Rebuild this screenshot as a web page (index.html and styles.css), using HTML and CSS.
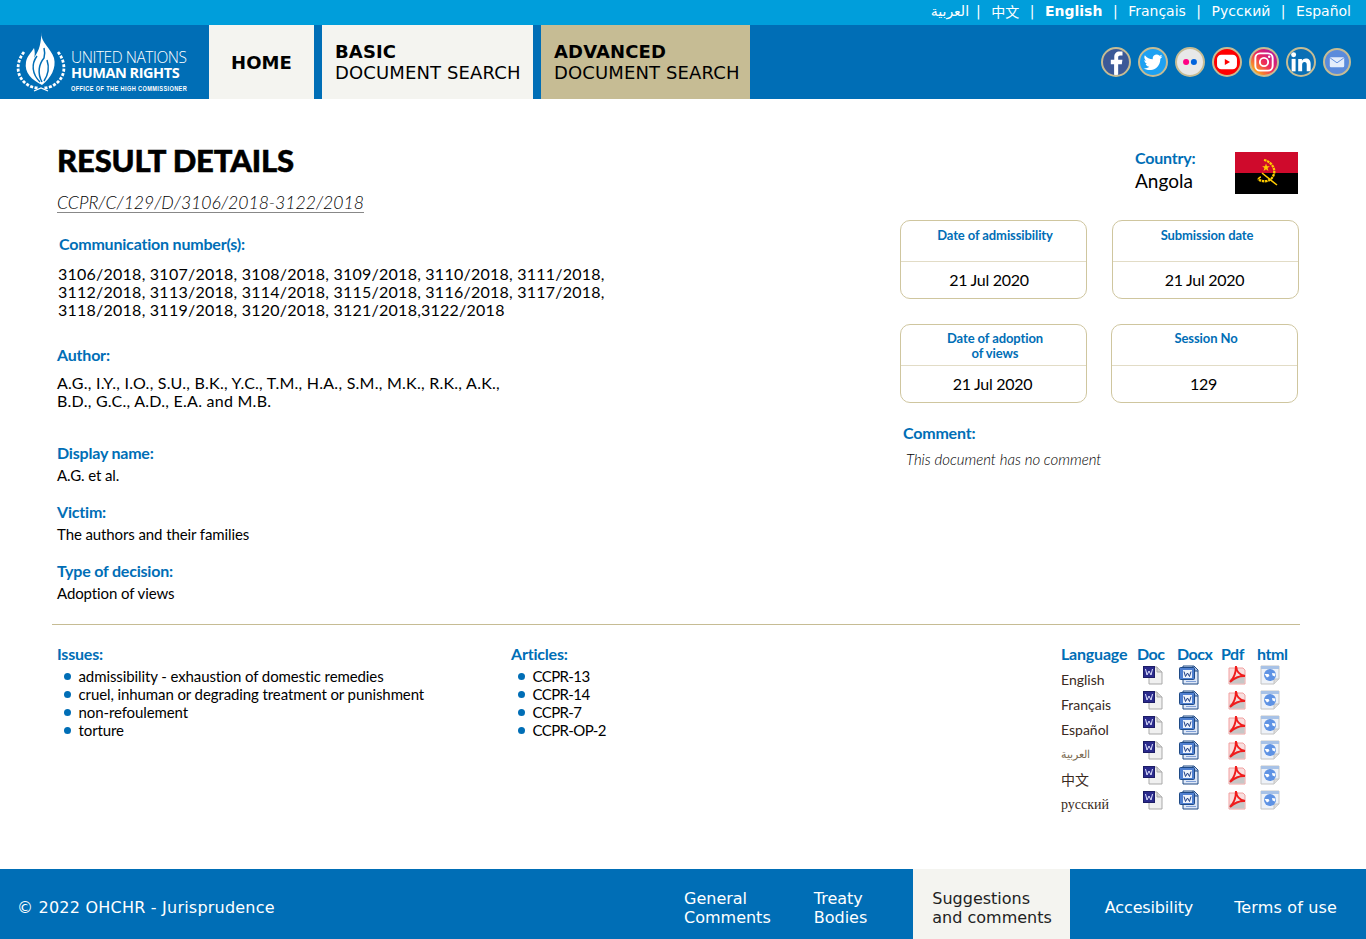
FILE: index.html
```html
<!DOCTYPE html>
<html lang="en">
<head>
  <meta charset="UTF-8" />
  <title>Result details - OHCHR Jurisprudence</title>
  <link rel="stylesheet" href="styles.css">
</head>
<body>

  <svg class="sprites" width="0" height="0" aria-hidden="true">
    <symbol id="doc" viewBox="0 0 20 20">
      <path d="M6 2h8l5 5v12H6z" fill="#f0f0f0" stroke="#a9a9a9"/>
      <path d="M14 2v5h5" fill="#d8d8d8" stroke="#a9a9a9"/>
      <rect x=".5" y="1.500" width="11" height="11" fill="#2a2a8c" stroke="#1c1c66"/>
      <path d="M2.500 4l1.500 6 2-4 2 4 1.500-6" fill="none" stroke="#dfe3ff" stroke-width="1"/>
    </symbol>
    <symbol id="docx" viewBox="0 0 20 20">
      <path d="M4 1h11l4 4v14H4z" fill="#dfe8f7" stroke="#1f4a86"/>
      <path d="M14 1v5h5" fill="#9db8e4" stroke="#1f4a86"/>
      <rect x=".5" y="2.500" width="15" height="12" rx="1" fill="#4f7fd0" stroke="#1f4a86"/>
      <rect x="4" y="5" width="9" height="8" fill="#eef3fb"/>
      <path d="M5 6.500l1.500 5 2-3.500 2 3.500 1.500-5" fill="none" stroke="#1f3f86" stroke-width="1"/>
      <path d="M7 16.500h10" stroke="#7fa0d8"/>
    </symbol>
    <symbol id="pdf" viewBox="0 0 18 20">
      <path d="M1 3h14l2 2v14H1z" fill="#f8dede" stroke="#f2a0a0"/>
      <path d="M1.500 14L16.500 9v9.500h-15z" fill="#c6c6c6"/>
      <path d="M2 17c3-3 6-8 6-16 .5 6 3 9 9 10-6-.5-10 1.500-15 6z" fill="none" stroke="#f01c1c" stroke-width="2"/>
    </symbol>
    <symbol id="html" viewBox="0 0 20 20">
      <path d="M1 1h18v13l-5 5H1z" fill="#eef2f8" stroke="#c4c4c4"/>
      <path d="M19 14h-5v5" fill="#ddd" stroke="#c4c4c4"/>
      <path d="M1 1h18v3H1z" fill="#a8c2e6"/>
      <circle cx="10" cy="10" r="6" fill="#5f93e4"/>
      <path d="M4.500 9h4l1 2-2.500 1.500zM12 8l3.500.5-.5 3-2.500-1z" fill="#fff"/>
    </symbol>
  </svg>

  <header>
    <div class="langbar">
      <a class="lang-ar" href="#">العربية</a><span class="sep first">|</span>
      <a href="#">中文</a><span class="sep">|</span>
      <a class="current" href="#">English</a><span class="sep">|</span>
      <a href="#">Français</a><span class="sep">|</span>
      <a href="#">Русский</a><span class="sep">|</span>
      <a href="#">Español</a>
    </div>
    <div class="mainbar">
      <a class="logo" href="#">
        <svg class="emblem" width="50" height="60" viewBox="0 0 50 60">
          <path d="M25.500 0C24 10 35 16 38 26c2.500 10-3 20-12 27C16 48 8 41 10 30c1-6 5-9 8-14 1 4 1 7 0 10 3-5 7-10 7.500-26z" fill="#fff"/>
          <g fill="none" stroke="#006eb6" stroke-width="1.500">
            <path d="M24 50C16 42 15 32 21 24"/>
            <path d="M26 50c-5-9-3-18 2-24 1-3 1-6 0-10"/>
            <path d="M28 49c4-6 6-12 3-21"/>
          </g>
          <g fill="none" stroke="#fff" stroke-width="2.800" stroke-dasharray="3 1.500">
            <path d="M8 20C0 30-1 45 12 53c3 2 7 3 11 3"/>
            <path d="M42 20c8 10 9 25-4 33-3 2-7 3-11 3"/>
          </g>
          <path d="M18 59l7-3 7 3" fill="none" stroke="#fff" stroke-width="1.200"/>
        </svg>
        <span class="logo-text">
          <span class="logo-un">UNITED NATIONS</span>
          <span class="logo-hr">HUMAN RIGHTS</span>
          <span class="logo-off">OFFICE OF THE HIGH COMMISSIONER</span>
        </span>
      </a>
      <nav class="mainnav">
        <a class="tab tab-home" href="#"><b>HOME</b></a>
        <a class="tab tab-basic" href="#"><b>BASIC</b><span>DOCUMENT SEARCH</span></a>
        <a class="tab tab-adv" href="#"><b>ADVANCED</b><span>DOCUMENT SEARCH</span></a>
      </nav>
      <div class="social">
        <a class="soc soc-fb" href="#"><svg viewBox="0 0 30 30"><path d="M17.500 30V17.500h4.200l.7-5h-4.900V9.800c0-1.400.5-2.400 2.400-2.400h2.600V3c-.7-.1-2-.2-3.500-.2-3.600 0-6 2.200-6 6.200v3.500H9v5h3.800V30z" fill="#fff"/></svg></a>
        <a class="soc soc-tw" href="#"><svg viewBox="0 0 30 30"><path d="M26 8.500c-.8.400-1.700.6-2.600.7.900-.6 1.600-1.400 2-2.500-.9.500-1.800.9-2.900 1.100-1.700-1.900-4.600-2-6.400-.2-1.200 1.100-1.700 2.800-1.300 4.300-3.600-.2-7-1.900-9.200-4.700-1.200 2.100-.6 4.700 1.400 6-.7 0-1.400-.2-2-.6 0 2.200 1.500 4.100 3.600 4.500-.7.200-1.400.2-2.100.1.600 1.900 2.300 3.100 4.300 3.200-2 1.500-4.400 2.200-6.800 1.900 6.700 4.300 15.700 1.600 18.600-6 .6-1.600.9-3.300.9-5 .9-.7 1.700-1.500 2.500-2.800z" fill="#fff"/></svg></a>
        <a class="soc soc-fl" href="#"><svg viewBox="0 0 30 30"><circle cx="10.500" cy="15" r="3.500" fill="#ff0084"/><circle cx="19.500" cy="15" r="3.500" fill="#0063dc"/></svg></a>
        <a class="soc soc-yt" href="#"><svg viewBox="0 0 30 30"><rect x="3.500" y="6.500" width="23" height="17" rx="5" fill="#fff"/><path d="M12.500 11.500v7l6-3.500z" fill="#f00"/></svg></a>
        <a class="soc soc-ig" href="#"><svg viewBox="0 0 30 30"><rect x="5" y="5" width="20" height="20" rx="5.500" fill="none" stroke="#fff" stroke-width="2.200"/><circle cx="15" cy="15" r="4.800" fill="none" stroke="#fff" stroke-width="2.200"/><circle cx="21" cy="9" r="1.400" fill="#fff"/></svg></a>
        <a class="soc soc-in" href="#"><svg viewBox="3 2 25 25"><rect x="6.500" y="11.500" width="3.800" height="12" fill="#fff"/><circle cx="8.400" cy="7.500" r="2.400" fill="#fff"/><path d="M12.800 11.500h3.600v1.700c.8-1.300 2.200-2 3.700-2 3.200 0 4.700 1.900 4.700 5.300v7h-3.800v-6.400c0-1.800-.7-2.700-2.100-2.700-1.600 0-2.300 1.100-2.300 2.800v6.300h-3.800z" fill="#fff"/></svg></a>
        <a class="soc soc-ml" href="#"><svg viewBox="0 0 30 30"><rect x="6" y="9" width="18" height="12.500" rx="1.500" fill="#e4edfb"/><path d="M6.500 10l8.500 6 8.500-6" fill="none" stroke="#5b8bdc" stroke-width="1.200"/></svg></a>
      </div>
    </div>
  </header>

  <main>
    <section class="top">
      <div class="left">
        <h1>RESULT DETAILS</h1>
        <a class="symbol" href="#">CCPR/C/129/D/3106/2018-3122/2018</a>

        <div class="field field-comm">
          <h2>Communication number(s):</h2>
          <p class="comm-text">3106/2018, 3107/2018, 3108/2018, 3109/2018, 3110/2018, 3111/2018,<br>3112/2018, 3113/2018, 3114/2018, 3115/2018, 3116/2018, 3117/2018,<br>3118/2018, 3119/2018, 3120/2018, 3121/2018,3122/2018</p>
        </div>
        <div class="field field-author">
          <h2>Author:</h2>
          <p class="author-text">A.G., I.Y., I.O., S.U., B.K., Y.C., T.M., H.A., S.M., M.K., R.K., A.K.,<br>B.D., G.C., A.D., E.A. and M.B.</p>
        </div>
        <div class="field field-small first">
          <h2>Display name:</h2>
          <p>A.G. et al.</p>
        </div>
        <div class="field field-small">
          <h2>Victim:</h2>
          <p>The authors and their families</p>
        </div>
        <div class="field field-small">
          <h2>Type of decision:</h2>
          <p>Adoption of views</p>
        </div>
      </div>

      <aside class="right">
        <div class="country">
          <div class="country-name">
            <h2>Country:</h2>
            <p>Angola</p>
          </div>
          <svg class="flag" width="63" height="42" viewBox="0 0 63 42">
            <rect width="63" height="21" fill="#cf0a2c"/>
            <rect y="21" width="63" height="21" fill="#000"/>
            <path d="M29 8c9 2 14 12 7 19-4 3-9 3-13 0" fill="none" stroke="#ffcb00" stroke-width="2.300" stroke-dasharray="2.500 .7"/>
            <path d="M27 21l15 12M23 27c1-1 2-2 3-2" fill="none" stroke="#ffcb00" stroke-width="1.600"/>
            <path d="M31 11.500l1 2.800h2.900l-2.300 1.800.8 2.900-2.400-1.700-2.400 1.700.8-2.900-2.300-1.800H30z" fill="#ffcb00"/>
          </svg>
        </div>
        <div class="dates">
          <div class="date-card date-first">
            <h3>Date of admissibility</h3>
            <p>21 Jul 2020</p>
          </div>
          <div class="date-card">
            <h3>Submission date</h3>
            <p>21 Jul 2020</p>
          </div>
          <div class="date-card date-row2">
            <h3>Date of adoption<br>of views</h3>
            <p>21 Jul 2020</p>
          </div>
          <div class="date-card date-row2 date-last">
            <h3>Session No</h3>
            <p>129</p>
          </div>
        </div>
        <div class="comment">
          <h2>Comment:</h2>
          <p>This document has no comment</p>
        </div>
      </aside>
    </section>

    <section class="bottom">
      <div class="issues">
        <h2>Issues:</h2>
        <ul>
          <li>admissibility - exhaustion of domestic remedies</li>
          <li>cruel, inhuman or degrading treatment or punishment</li>
          <li>non-refoulement</li>
          <li>torture</li>
        </ul>
      </div>
      <div class="articles">
        <h2>Articles:</h2>
        <ul>
          <li>CCPR-13</li>
          <li>CCPR-14</li>
          <li>CCPR-7</li>
          <li>CCPR-OP-2</li>
        </ul>
      </div>
      <table class="files">
        <thead>
          <tr><th>Language</th><th>Doc</th><th>Docx</th><th>Pdf</th><th>html</th></tr>
        </thead>
        <tbody>
          <tr><td class="lng">English</td><td><svg class="fi"><use href="#doc"/></svg></td><td><svg class="fi"><use href="#docx"/></svg></td><td><svg class="fi"><use href="#pdf"/></svg></td><td><svg class="fi"><use href="#html"/></svg></td></tr>
          <tr><td class="lng">Français</td><td><svg class="fi"><use href="#doc"/></svg></td><td><svg class="fi"><use href="#docx"/></svg></td><td><svg class="fi"><use href="#pdf"/></svg></td><td><svg class="fi"><use href="#html"/></svg></td></tr>
          <tr><td class="lng">Español</td><td><svg class="fi"><use href="#doc"/></svg></td><td><svg class="fi"><use href="#docx"/></svg></td><td><svg class="fi"><use href="#pdf"/></svg></td><td><svg class="fi"><use href="#html"/></svg></td></tr>
          <tr><td class="lng lng-ar">العربية</td><td><svg class="fi"><use href="#doc"/></svg></td><td><svg class="fi"><use href="#docx"/></svg></td><td><svg class="fi"><use href="#pdf"/></svg></td><td><svg class="fi"><use href="#html"/></svg></td></tr>
          <tr><td class="lng">中文</td><td><svg class="fi"><use href="#doc"/></svg></td><td><svg class="fi"><use href="#docx"/></svg></td><td><svg class="fi"><use href="#pdf"/></svg></td><td><svg class="fi"><use href="#html"/></svg></td></tr>
          <tr><td class="lng lng-ru">русский</td><td><svg class="fi"><use href="#doc"/></svg></td><td><svg class="fi"><use href="#docx"/></svg></td><td><svg class="fi"><use href="#pdf"/></svg></td><td><svg class="fi"><use href="#html"/></svg></td></tr>
        </tbody>
      </table>
    </section>
  </main>

  <footer>
    <div class="copy">© 2022 OHCHR - Jurisprudence</div>
    <nav class="footnav">
      <a class="fl fl-gc" href="#">General<br>Comments</a>
      <a class="fl fl-tb" href="#">Treaty<br>Bodies</a>
      <a class="fl fl-sg" href="#">Suggestions<br>and comments</a>
      <a class="fl fl-ac" href="#">Accesibility</a>
      <a class="fl fl-tu" href="#">Terms of use</a>
    </nav>
  </footer>

</body>
</html>
```

FILE: styles.css
```css
:root {
  --blue: #006eb6;
  --sky: #009edb;
  --tan: #c6bc94;
  --paper: #f4f4f0;
  --line: #cfc69f;
}
* {
  box-sizing: border-box;
}
body {
  margin: 0;
  height: 939px;
  display: flex;
  flex-direction: column;
  font-family: "Lato", "Noto Sans CJK SC", sans-serif;
  color: #000;
  background: #fff;
}
a {
  color: inherit;
  text-decoration: none;
}
h1, h2, h3, p, ul {
  margin: 0;
  padding: 0;
}
.sprites {
  position: absolute;
}

/* header */
.langbar {
  height: 25px;
  background: var(--sky);
  color: #fff;
  display: flex;
  justify-content: flex-end;
  align-items: center;
  padding: 0 15px 3px 0;
  font-family: "DejaVu Sans", "Noto Sans CJK SC", sans-serif;
  font-size: 14px;
}
.langbar .current {
  font-weight: bold;
}
.sep {
  margin: 0 10.500px;
}
.sep.first {
  margin-left: 7px;
}
.mainbar {
  height: 74px;
  background: var(--blue);
  display: flex;
  align-items: stretch;
}
.logo {
  width: 209px;
  display: flex;
  align-items: center;
  padding-left: 16px;
  color: #fff;
}
.emblem {
  flex: none;
  margin-right: 5px;
}
.logo-text {
  display: flex;
  flex-direction: column;
  font-family: "Open Sans", sans-serif;
  white-space: nowrap;
  padding-top: 19px;
}
.logo-un {
  font-size: 15.500px;
  line-height: 16px;
  letter-spacing: -.45px;
  font-weight: 300;
}
.logo-hr {
  font-size: 14.500px;
  line-height: 15px;
  font-weight: 700;
  letter-spacing: -.45px;
}
.logo-off {
  font-family: "Liberation Sans", sans-serif;
  font-size: 8px;
  line-height: 10px;
  margin-top: 4px;
  font-weight: 700;
  letter-spacing: .55px;
  transform: scaleX(.7);
  transform-origin: left;
  width: 120px;
}
.mainnav {
  display: flex;
  gap: 8px;
}
.tab {
  background: var(--paper);
  font-family: "DejaVu Sans", sans-serif;
  font-size: 18px;
  line-height: 21px;
  display: flex;
  flex-direction: column;
  justify-content: center;
  padding: 0 13px;
  white-space: nowrap;
  letter-spacing: .13px;
}
.tab-home {
  width: 105px;
  align-items: center;
  padding: 0;
}
.tab-basic {
  width: 211px;
}
.tab-adv {
  width: 209px;
  background: var(--tan);
}
.social {
  margin-left: auto;
  padding-right: 15px;
  display: flex;
  align-items: center;
  gap: 7px;
}
.soc {
  width: 30px;
  height: 30px;
  border-radius: 50%;
  border: 2px solid var(--tan);
  overflow: hidden;
  display: block;
}
.soc svg {
  display: block;
  width: 100%;
  height: 100%;
}
.soc-fb { background: #3b5998; }
.soc-tw { background: #1da1f2; }
.soc-fl { background: #e8e8e8; }
.soc-yt { background: #f00; }
.soc-ig { background: linear-gradient(45deg, #fdb515 10%, #ee2a5b 50%, #b5179e 90%); }
.soc-in { background: #0a6fb5; }
.soc-ml {
  background: #5b8bdc;
  width: 28px;
  height: 28px;
}

/* main */
main {
  flex: 1;
}
.top {
  display: flex;
  justify-content: space-between;
  padding: 0 67px 0 57px;
  height: 525px;
}
.left {
  padding-top: 45px;
}
h1 {
  font-size: 31px;
  line-height: 32px;
  font-weight: 900;
  letter-spacing: -.15px;
  -webkit-text-stroke: .5px #000;
}
.symbol {
  display: inline-block;
  margin-top: 18px;
  font-size: 17.600px;
  line-height: 18px;
  font-style: italic;
  font-weight: 300;
  color: #000;
  border-bottom: 1px solid #888;
}
h2 {
  font-size: 16px;
  line-height: 20px;
  font-weight: 700;
  letter-spacing: -.2px;
  color: var(--blue);
}
.field p {
  font-size: 16px;
  line-height: 18px;
}
.field-comm {
  margin-top: 21px;
}
.field-comm h2 {
  padding-left: 2px;
}
.comm-text {
  margin-top: 11px;
  padding-left: 1px;
  letter-spacing: .24px;
}
.field-author {
  margin-top: 26px;
}
.author-text {
  margin-top: 9px;
  letter-spacing: .25px;
}
.field-small {
  margin-top: 17px;
}
.field-small p {
  font-size: 15px;
  letter-spacing: -.1px;
  line-height: 20px;
  margin-top: 2px;
}
.field-small.first {
  margin-top: 33px;
}
.right {
  width: 399px;
  padding-top: 49px;
}
.country {
  display: flex;
  justify-content: flex-end;
  align-items: flex-start;
  gap: 40px;
  padding-right: 1px;
}
.country-name {
  width: 60px;
  white-space: nowrap;
}
.country-name p {
  font-size: 19px;
  line-height: 26px;
}
.flag {
  margin-top: 4px;
}
.dates {
  margin-top: 26px;
  display: grid;
  grid-template-columns: 187px 187px;
  justify-content: space-between;
  gap: 25px 0;
}
.date-card {
  border: 1px solid var(--line);
  border-radius: 10px;
  height: 79px;
  text-align: center;
  display: flex;
  flex-direction: column;
}
.date-card h3 {
  flex: none;
  height: 41px;
  border-bottom: 1px solid #e2dcc6;
  font-size: 13px;
  line-height: 15px;
  letter-spacing: -.1px;
  padding: 7px 0 0 3px;
  color: var(--blue);
  font-weight: 700;
}
.date-card p {
  flex: 1;
  padding-right: 2px;
  font-size: 16px;
  letter-spacing: -.3px;
  line-height: 35px;
}
.date-first p {
  padding-right: 9px;
}
.date-row2 h3 {
  padding-top: 6px;
}
.date-last {
  margin: 0 1px 0 -1px;
}
.comment {
  margin-top: 20px;
  padding-left: 3px;
}
.comment p {
  margin-top: 6px;
  padding-left: 3px;
  font-size: 15px;
  line-height: 20px;
  font-style: italic;
  font-weight: 300;
  color: #000;
}

/* issues, articles, files */
.bottom {
  margin: 0 66px 0 52px;
  border-top: 1px solid var(--tan);
  padding: 19px 0 0 5px;
  display: flex;
}
.issues {
  width: 454px;
}
.articles {
  flex: 1;
}
.bottom ul {
  list-style: none;
  margin-top: 3px;
}
.bottom li {
  position: relative;
  padding-left: 21.500px;
  font-size: 15px;
  line-height: 18px;
  letter-spacing: -.1px;
}
.articles li {
  letter-spacing: -.6px;
}
.bottom li::before {
  content: "";
  position: absolute;
  left: 7px;
  top: 6px;
  width: 7px;
  height: 7px;
  border-radius: 50%;
  background: var(--blue);
}
.files {
  border-collapse: collapse;
  table-layout: fixed;
  width: 226px;
  margin-right: 13px;
  align-self: flex-start;
}
.files th {
  padding: 0;
  height: 21px;
  font-size: 16px;
  line-height: 20px;
  font-weight: 700;
  letter-spacing: -.45px;
  color: var(--blue);
  text-align: left;
  vertical-align: top;
  white-space: nowrap;
}
.files th:nth-child(1) {
  width: 76px;
  letter-spacing: -.2px;
}
.files th:nth-child(2) { width: 40px; }
.files th:nth-child(3) { width: 44px; }
.files th:nth-child(4) { width: 36px; }
.files th:nth-child(5) { width: 30px; }
.files td {
  height: 25px;
  padding: 0;
  vertical-align: top;
}
.files td.lng {
  padding-top: 5px;
  font-size: 14px;
  line-height: 20px;
  color: #3a2a22;
}
.files td.lng-ar {
  font-family: "DejaVu Serif", serif;
  font-size: 11px;
  color: #7a6a50;
}
.files td.lng-ru {
  font-family: "Liberation Serif", serif;
}
.fi {
  display: block;
  width: 20px;
  height: 20px;
}
.files td:nth-child(2) .fi { margin-left: 6px; }
.files td:nth-child(3) .fi { margin-left: 2px; }
.files td:nth-child(4) .fi { margin-left: 6px; }
.files td:nth-child(5) .fi { margin-left: 3px; }

/* footer */
footer {
  height: 70px;
  background: var(--blue);
  color: #fff;
  display: flex;
  justify-content: space-between;
  align-items: stretch;
  font-family: "DejaVu Sans", sans-serif;
  font-size: 16px;
  line-height: 19px;
}
.copy {
  align-self: center;
  padding: 7px 0 0 17px;
  letter-spacing: .22px;
}
.footnav {
  display: flex;
}
.fl {
  display: flex;
  align-items: center;
  padding-top: 7px;
  white-space: nowrap;
}
.fl-gc { padding-right: 43px; }
.fl-tb { padding-right: 46px; }
.fl-sg {
  background: var(--paper);
  color: #222;
  padding-left: 19px;
  padding-right: 18px;
}
.fl-ac {
  padding-left: 35px;
  padding-right: 41px;
  letter-spacing: -.15px;
}
.fl-tu {
  padding-right: 29px;
  letter-spacing: .15px;
}
```
